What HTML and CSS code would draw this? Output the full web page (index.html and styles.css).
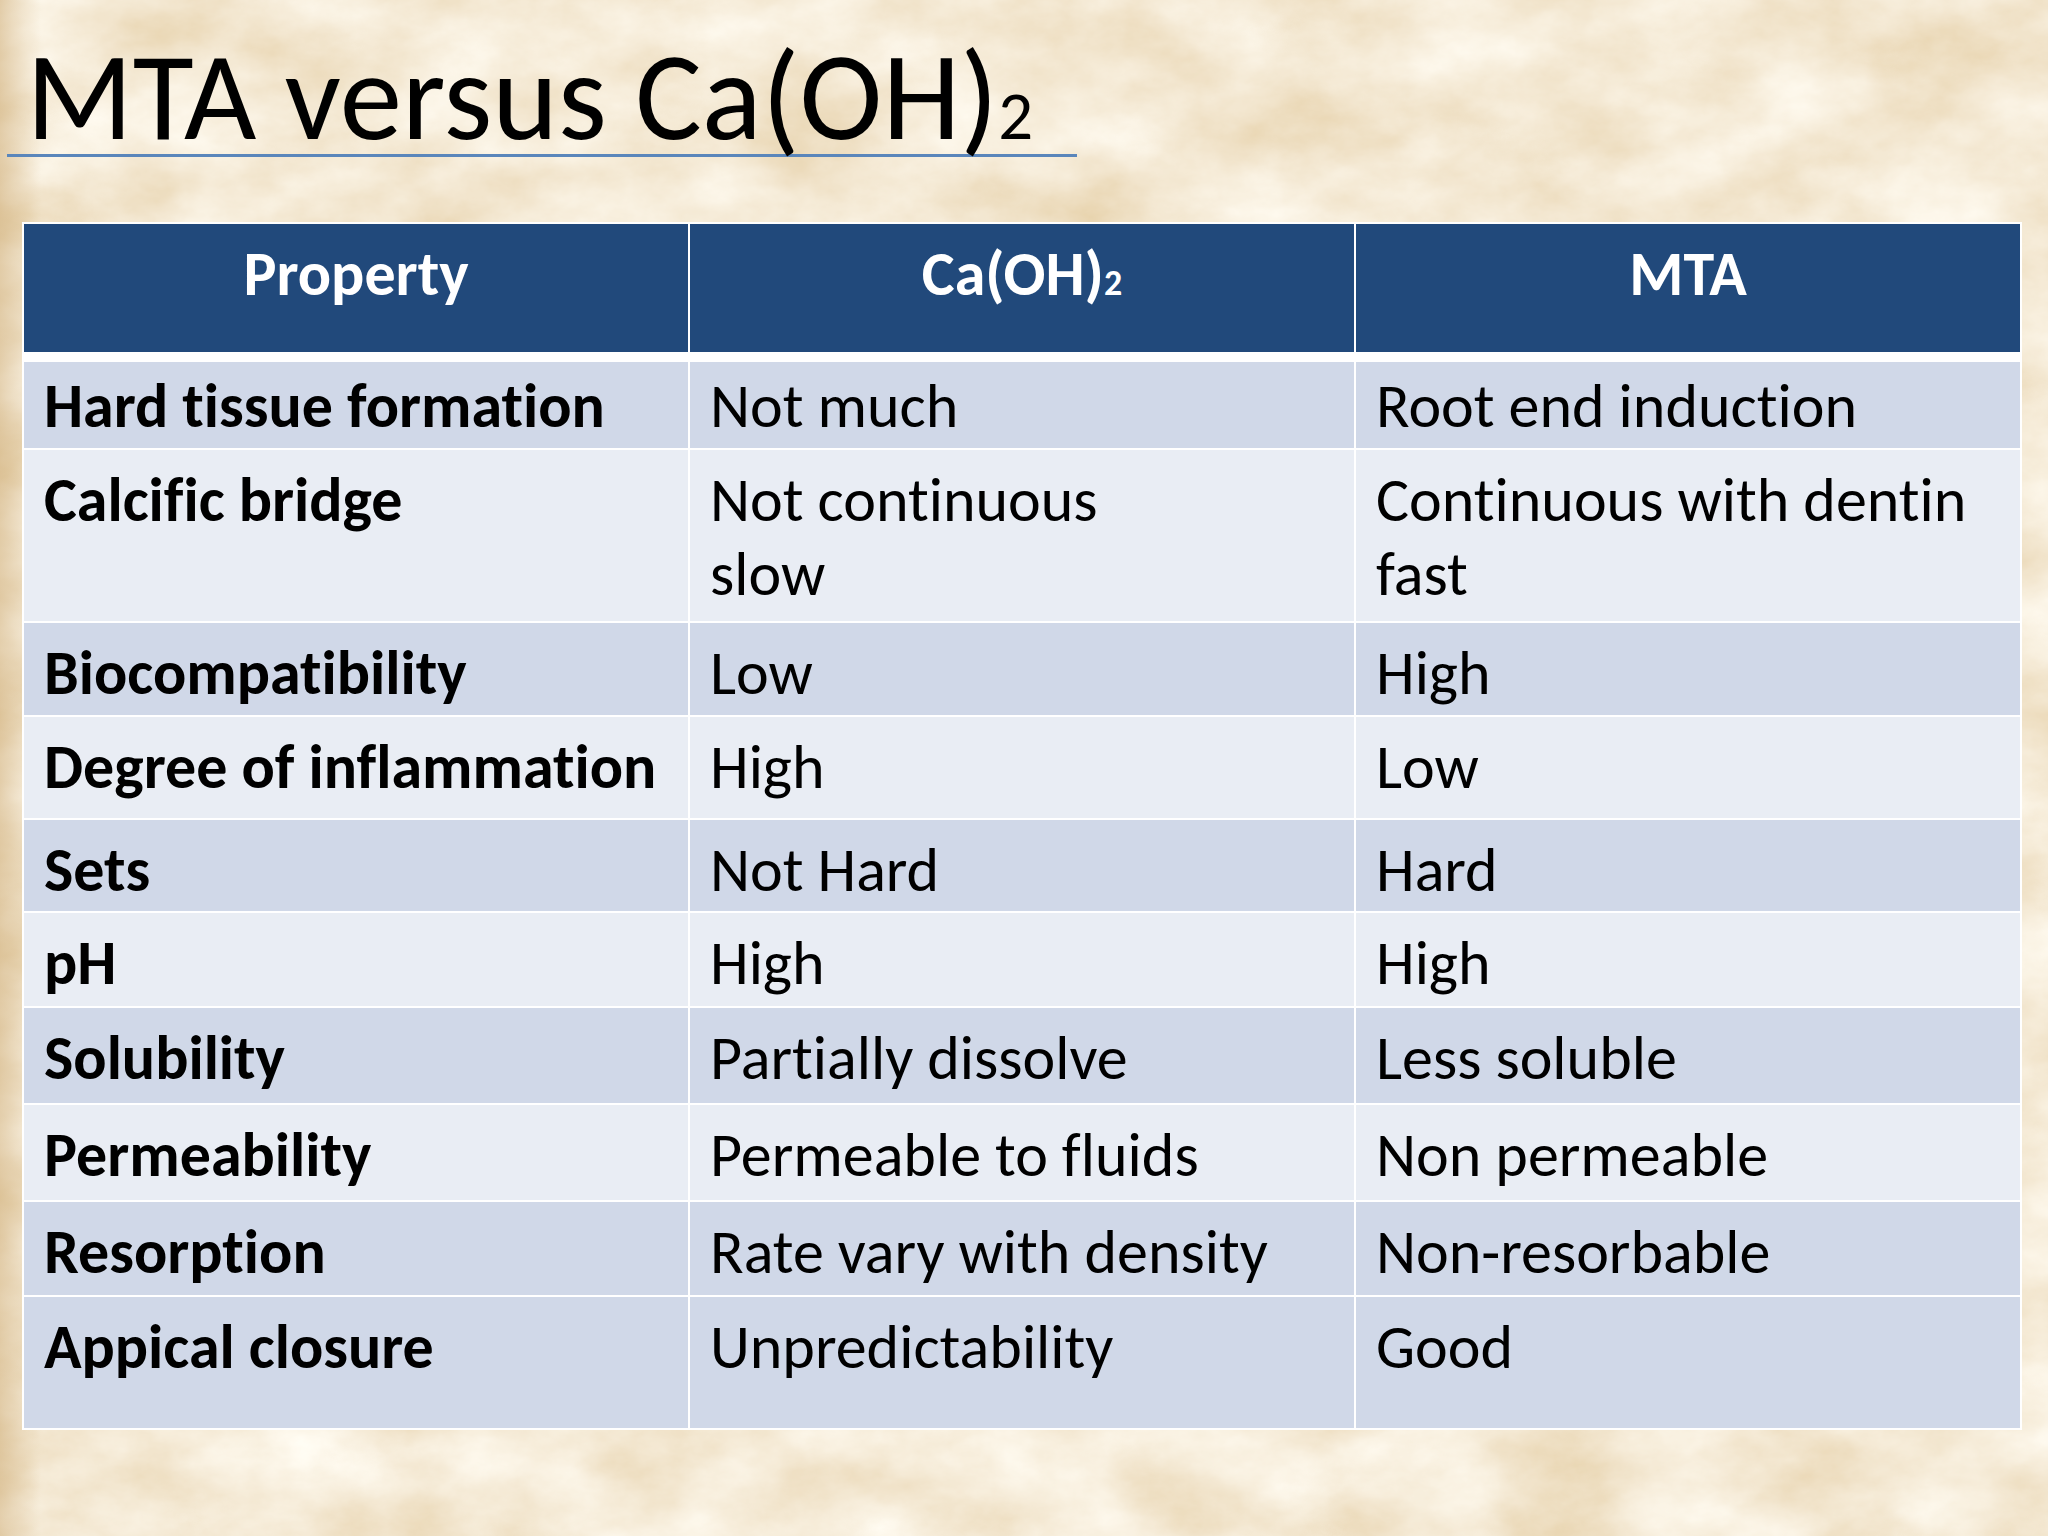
FILE: index.html
```html
<!DOCTYPE html>
<html lang="en">
<head>
<meta charset="utf-8">
<title>MTA versus Ca(OH)2</title>
<link rel="stylesheet" href="styles.css">
</head>
<body>
<svg class="parchment" width="2048" height="1536" viewBox="0 0 2048 1536" aria-hidden="true">
  <filter id="paper" x="0" y="0" width="100%" height="100%">
    <feTurbulence type="fractalNoise" baseFrequency="0.008 0.012" numOctaves="6" seed="11" result="n"/>
    <feColorMatrix in="n" type="matrix" values="0.24 0 0 0 0.79  0.38 0 0 0 0.63  0.56 0 0 0 0.385  0 0 0 0 1"/>
  </filter>
  <linearGradient id="edge" x1="0" y1="0" x2="1" y2="0">
    <stop offset="0" stop-color="#c9a46a" stop-opacity="0.45"/>
    <stop offset="0.02" stop-color="#c9a46a" stop-opacity="0"/>
    <stop offset="1" stop-color="#c9a46a" stop-opacity="0"/>
  </linearGradient>
  <rect width="2048" height="1536" filter="url(#paper)"/>
  <rect width="2048" height="1536" fill="url(#edge)"/>
</svg>
<main class="slide">
  <h1 class="title">MTA versus Ca(OH)<span class="sub">2</span></h1>
  <div class="grid">
    <div class="cell head">Property</div>
    <div class="cell head">Ca(OH)<span class="sub-head">2</span></div>
    <div class="cell head">MTA</div>

    <div class="cell dark first prop">Hard tissue formation</div>
    <div class="cell dark first">Not much</div>
    <div class="cell dark first">Root end induction</div>

    <div class="cell light prop">Calcific bridge</div>
    <div class="cell light">Not continuous<br>slow</div>
    <div class="cell light">Continuous with dentin<br>fast</div>

    <div class="cell dark prop">Biocompatibility</div>
    <div class="cell dark">Low</div>
    <div class="cell dark">High</div>

    <div class="cell light prop">Degree of inflammation</div>
    <div class="cell light">High</div>
    <div class="cell light">Low</div>

    <div class="cell dark prop">Sets</div>
    <div class="cell dark">Not Hard</div>
    <div class="cell dark">Hard</div>

    <div class="cell light prop">pH</div>
    <div class="cell light">High</div>
    <div class="cell light">High</div>

    <div class="cell dark prop">Solubility</div>
    <div class="cell dark">Partially dissolve</div>
    <div class="cell dark">Less soluble</div>

    <div class="cell light prop">Permeability</div>
    <div class="cell light">Permeable to fluids</div>
    <div class="cell light">Non permeable</div>

    <div class="cell dark prop">Resorption</div>
    <div class="cell dark">Rate vary with density</div>
    <div class="cell dark">Non-resorbable</div>

    <div class="cell dark prop">Appical closure</div>
    <div class="cell dark">Unpredictability</div>
    <div class="cell dark">Good</div>
  </div>
</main>
</body>
</html>
```

FILE: styles.css
```css
html, body {
  margin: 0;
  padding: 0;
  width: 2048px;
  height: 1536px;
  overflow: hidden;
  background: #e9d5aa;
}

.parchment {
  position: absolute;
  left: 0;
  top: 0;
  z-index: 0;
}

.slide {
  position: relative;
  z-index: 1;
  width: 2048px;
  height: 1536px;
  padding-top: 52px;
  box-sizing: border-box;
  font-family: Carlito, Calibri, "Liberation Sans Narrow", "Open Sans", sans-serif;
  font-variant-ligatures: none;
  color: #000;
}

.title {
  margin: 0 0 65px 7px;
  width: 1051px;
  padding-left: 19px;
  font-size: 125px;
  font-weight: normal;
  line-height: 90px;
  height: 102px;
  border-bottom: 3px solid #5a86bb;
  white-space: nowrap;
}

.sub {
  font-size: 0.55em;
  vertical-align: baseline;
}

.sub-head {
  font-size: 0.58em;
  vertical-align: baseline;
}

.grid {
  margin-left: 22px;
  width: 2000px;
  box-sizing: border-box;
  padding: 2px;
  background: #ffffff;
  display: grid;
  grid-template-columns: 1fr 1fr 1fr;
  grid-template-rows: 136px 86px 171px 92px 101px 91px 93px 95px 95px 93px 131px;
  gap: 2px;
}

.cell {
  box-sizing: border-box;
  padding: 13px 20px 0 20px;
  font-size: 62px;
  line-height: 1.2;
  white-space: nowrap;
}

.head {
  background: #21497b;
  color: #ffffff;
  font-weight: bold;
  text-align: center;
  border-bottom: 8px solid #ffffff;
}

.first {
  padding-top: 7px;
}

.prop {
  font-weight: bold;
}

.dark {
  background: #d0d8e8;
}

.light {
  background: #e9edf4;
}
```
